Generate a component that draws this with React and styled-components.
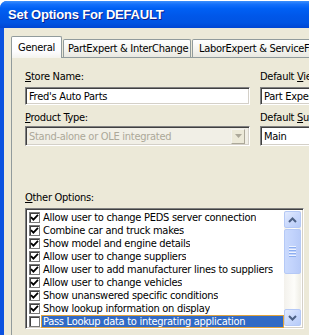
import React from 'react';
import styled, { createGlobalStyle } from 'styled-components';

const GlobalStyle = createGlobalStyle`
  html, body {
    margin: 0;
    padding: 0;
    background: #ffffff;
    overflow: hidden;
  }
  body {
    font-family: "DejaVu Sans Condensed", "Liberation Sans", sans-serif;
    font-size: 11px;
    letter-spacing: -0.28px;
  }
`;

const options = [
  { label: 'Allow user to change PEDS server connection', checked: true },
  { label: 'Combine car and truck makes', checked: true },
  { label: 'Show model and engine details', checked: true },
  { label: 'Allow user to change suppliers', checked: true },
  { label: 'Allow user to add manufacturer lines to suppliers', checked: true },
  { label: 'Allow user to change vehicles', checked: true },
  { label: 'Show unanswered specific conditions', checked: true },
  { label: 'Show lookup information on display', checked: true },
  { label: 'Pass Lookup data to integrating application', checked: false, selected: true },
];

const Window = styled.div`
  margin-top: 1px;
  width: 309px;
  height: 334px;
  display: flex;
  flex-direction: column;
  border-top-left-radius: 7px;
  overflow: hidden;
  background: #0b50dd;
`;

const TitleBar = styled.div`
  height: 27px;
  flex: none;
  display: flex;
  align-items: center;
  padding-left: 8px;
  background: linear-gradient(
    to bottom,
    #3c8ffb 0%,
    #1470fb 12%,
    #0060f4 28%,
    #0057e9 55%,
    #0054e3 80%,
    #0046d3 100%
  );
  color: #ffffff;
  font-family: "Liberation Sans", "DejaVu Sans", sans-serif;
  font-weight: bold;
  font-size: 13px;
  letter-spacing: -0.2px;
  text-shadow: 1px 1px 0 #0a1f8a;
  white-space: nowrap;
`;

const Body = styled.div`
  flex: 1;
  display: flex;
  flex-direction: column;
  border-left: 4px solid #0b52e0;
  background: #ece9d8;
  padding: 8px 0 0 7px;
  min-height: 0;
`;

const TabStrip = styled.div`
  display: flex;
  align-items: flex-end;
  height: 21px;
  flex: none;
  position: relative;
  z-index: 1;
`;

const Tab = styled.div`
  flex: none;
  box-sizing: border-box;
  width: ${(p) => p.$width}px;
  height: ${(p) => (p.$active ? 22 : 18)}px;
  margin-bottom: ${(p) => (p.$active ? -1 : 0)}px;
  margin-right: 1px;
  padding-left: ${(p) => p.$pad}px;
  display: flex;
  align-items: center;
  white-space: nowrap;
  overflow: hidden;
  color: #000;
  border: 1px solid #919b9c;
  border-bottom: none;
  border-radius: 2px 2px 0 0;
  background: ${(p) =>
    p.$active
      ? 'linear-gradient(to bottom, #ffffff, #fcfcfe 70%, #f4f3ee)'
      : 'linear-gradient(to bottom, #ffffff, #f3f3ef 60%, #e9e8e1)'};
`;

const Panel = styled.div`
  flex: 1;
  border: 1px solid #919b9c;
  border-right: none;
  border-bottom: none;
  background: #ece9d8;
  padding: 12px 0 0 13px;
`;

const TopRow = styled.div`
  display: flex;
  gap: 10px;
`;

const Column = styled.div`
  flex: none;
  width: ${(p) => p.$width}px;
  display: flex;
  flex-direction: column;
`;

const Label = styled.div`
  height: 13px;
  line-height: 13px;
  margin-top: ${(p) => p.$top || 0}px;
  white-space: nowrap;
  color: #000;
`;

const Sunken = styled.div`
  box-sizing: border-box;
  height: ${(p) => p.$height}px;
  margin-top: ${(p) => p.$top}px;
  border-top: 1px solid #808080;
  border-left: 1px solid #808080;
  border-bottom: 1px solid #ffffff;
  border-right: 1px solid #ffffff;
  box-shadow: inset 1px 1px 0 #404040, inset -1px -1px 0 #d4d0c8;
  background: ${(p) => (p.$disabled ? '#f1efe6' : '#ffffff')};
  color: ${(p) => (p.$disabled ? '#aca899' : '#000')};
  display: flex;
  align-items: center;
  padding: 0 2px 0 3px;
  white-space: nowrap;
  overflow: hidden;
`;

const ComboText = styled.span`
  flex: 1;
  overflow: hidden;
`;

const DropButton = styled.div`
  flex: none;
  box-sizing: border-box;
  width: 14px;
  height: 15px;
  margin-right: 2px;
  background: #ece9d8;
  border-top: 1px solid #f4f3ee;
  border-left: 1px solid #f4f3ee;
  border-right: 1px solid #aca899;
  border-bottom: 1px solid #aca899;
  display: flex;
  align-items: center;
  justify-content: center;
`;

const ListBox = styled(Sunken)`
  width: 279px;
  padding: 2px;
  align-items: stretch;
`;

const Items = styled.div`
  flex: 1;
  display: flex;
  flex-direction: column;
  min-width: 0;
`;

const Item = styled.div`
  height: 13px;
  flex: none;
  display: flex;
  align-items: center;
`;

const CheckBox = styled.span`
  flex: none;
  box-sizing: border-box;
  width: 11px;
  height: 11px;
  margin-left: 1px;
  border: 1px solid #7a7a7a;
  box-shadow: inset 1px 1px 0 #404040;
  background: #fff;
  display: flex;
  align-items: center;
  justify-content: center;
`;

const ItemText = styled.span`
  flex: ${(p) => (p.$selected ? 1 : 'none')};
  box-sizing: border-box;
  height: 13px;
  line-height: 11px;
  margin-left: 1px;
  padding-left: 1px;
  white-space: nowrap;
  overflow: hidden;
  color: ${(p) => (p.$selected ? '#ffffff' : '#000')};
  background: ${(p) => (p.$selected ? '#316ac5' : 'transparent')};
  border: 1px solid ${(p) => (p.$selected ? '#e0a23c' : 'transparent')};
`;

const ScrollBar = styled.div`
  flex: none;
  width: 17px;
  display: flex;
  flex-direction: column;
  background: linear-gradient(to right, #f3f1ec, #fdfdfa 60%, #eeede5);
`;

const ScrollButton = styled.div`
  flex: none;
  box-sizing: border-box;
  width: 17px;
  height: 17px;
  border: 1px solid #b5c9f6;
  border-radius: 2px;
  background: linear-gradient(135deg, #e3ebfe 0%, #cad9fc 50%, #b6cbf8 100%);
  display: flex;
  align-items: center;
  justify-content: center;
`;

const Track = styled.div`
  flex: 1;
  display: flex;
  flex-direction: column;
`;

const Thumb = styled(ScrollButton)`
  height: 45px;
  margin-top: 1px;
  flex-direction: column;
  gap: 1px;
  background: linear-gradient(to right, #cadafd 0%, #c2d3fc 50%, #b8cbf8 100%);
`;

const Grip = styled.span`
  width: 7px;
  height: 1px;
  background: #eef3fe;
  box-shadow: 0 1px 0 #8caef0;
  margin-bottom: 1px;
`;

const Check = () => (
  <svg width="9" height="9" viewBox="0 0 9 9">
    <path d="M1 4.2 L3.4 6.6 L8 1.8" fill="none" stroke="#000" strokeWidth="1.8" />
  </svg>
);

const Arrow = ({ up, color }) => (
  <svg width="9" height="6" viewBox="0 0 9 6">
    <path
      d={up ? 'M1 5 L4.5 1.5 L8 5' : 'M1 1 L4.5 4.5 L8 1'}
      fill="none"
      stroke={color}
      strokeWidth="2"
    />
  </svg>
);

const SmallTriangle = () => (
  <svg width="7" height="4" viewBox="0 0 7 4">
    <path d="M0 0 H7 L3.5 4 Z" fill="#aca899" />
  </svg>
);

const App = () => (
  <>
    <GlobalStyle />
    <Window>
      <TitleBar>Set Options For DEFAULT</TitleBar>
      <Body>
        <TabStrip>
          <Tab $active $width={51} $pad={6}>General</Tab>
          <Tab $width={128} $pad={4}>PartExpert &amp; InterChange</Tab>
          <Tab $width={150} $pad={6}>LaborExpert &amp; ServiceFacts</Tab>
        </TabStrip>
        <Panel>
          <TopRow>
            <Column $width={225}>
              <Label>
                <u>S</u>tore Name:
              </Label>
              <Sunken $height={18} $top={4}>Fred's Auto Parts</Sunken>
              <Label $top={6}>
                <u>P</u>roduct Type:
              </Label>
              <Sunken $height={20} $top={2} $disabled>
                <ComboText>Stand-alone or OLE integrated</ComboText>
                <DropButton>
                  <SmallTriangle />
                </DropButton>
              </Sunken>
            </Column>
            <Column $width={120}>
              <Label>
                Default <u>V</u>iew:
              </Label>
              <Sunken $height={18} $top={4}>Part Expert</Sunken>
              <Label $top={6}>
                Default <u>S</u>upplier:
              </Label>
              <Sunken $height={20} $top={2}>Main</Sunken>
            </Column>
          </TopRow>
          <Label $top={45}>
            <u>O</u>ther Options:
          </Label>
          <ListBox $height={121} $top={4}>
            <Items>
              {options.map((o) => (
                <Item key={o.label}>
                  <CheckBox>{o.checked && <Check />}</CheckBox>
                  <ItemText $selected={o.selected}>{o.label}</ItemText>
                </Item>
              ))}
            </Items>
            <ScrollBar>
              <ScrollButton>
                <Arrow up color="#4d6185" />
              </ScrollButton>
              <Track>
                <Thumb>
                  <Grip />
                  <Grip />
                  <Grip />
                  <Grip />
                </Thumb>
              </Track>
              <ScrollButton>
                <Arrow color="#4d6185" />
              </ScrollButton>
            </ScrollBar>
          </ListBox>
        </Panel>
      </Body>
    </Window>
  </>
);

export default App;
